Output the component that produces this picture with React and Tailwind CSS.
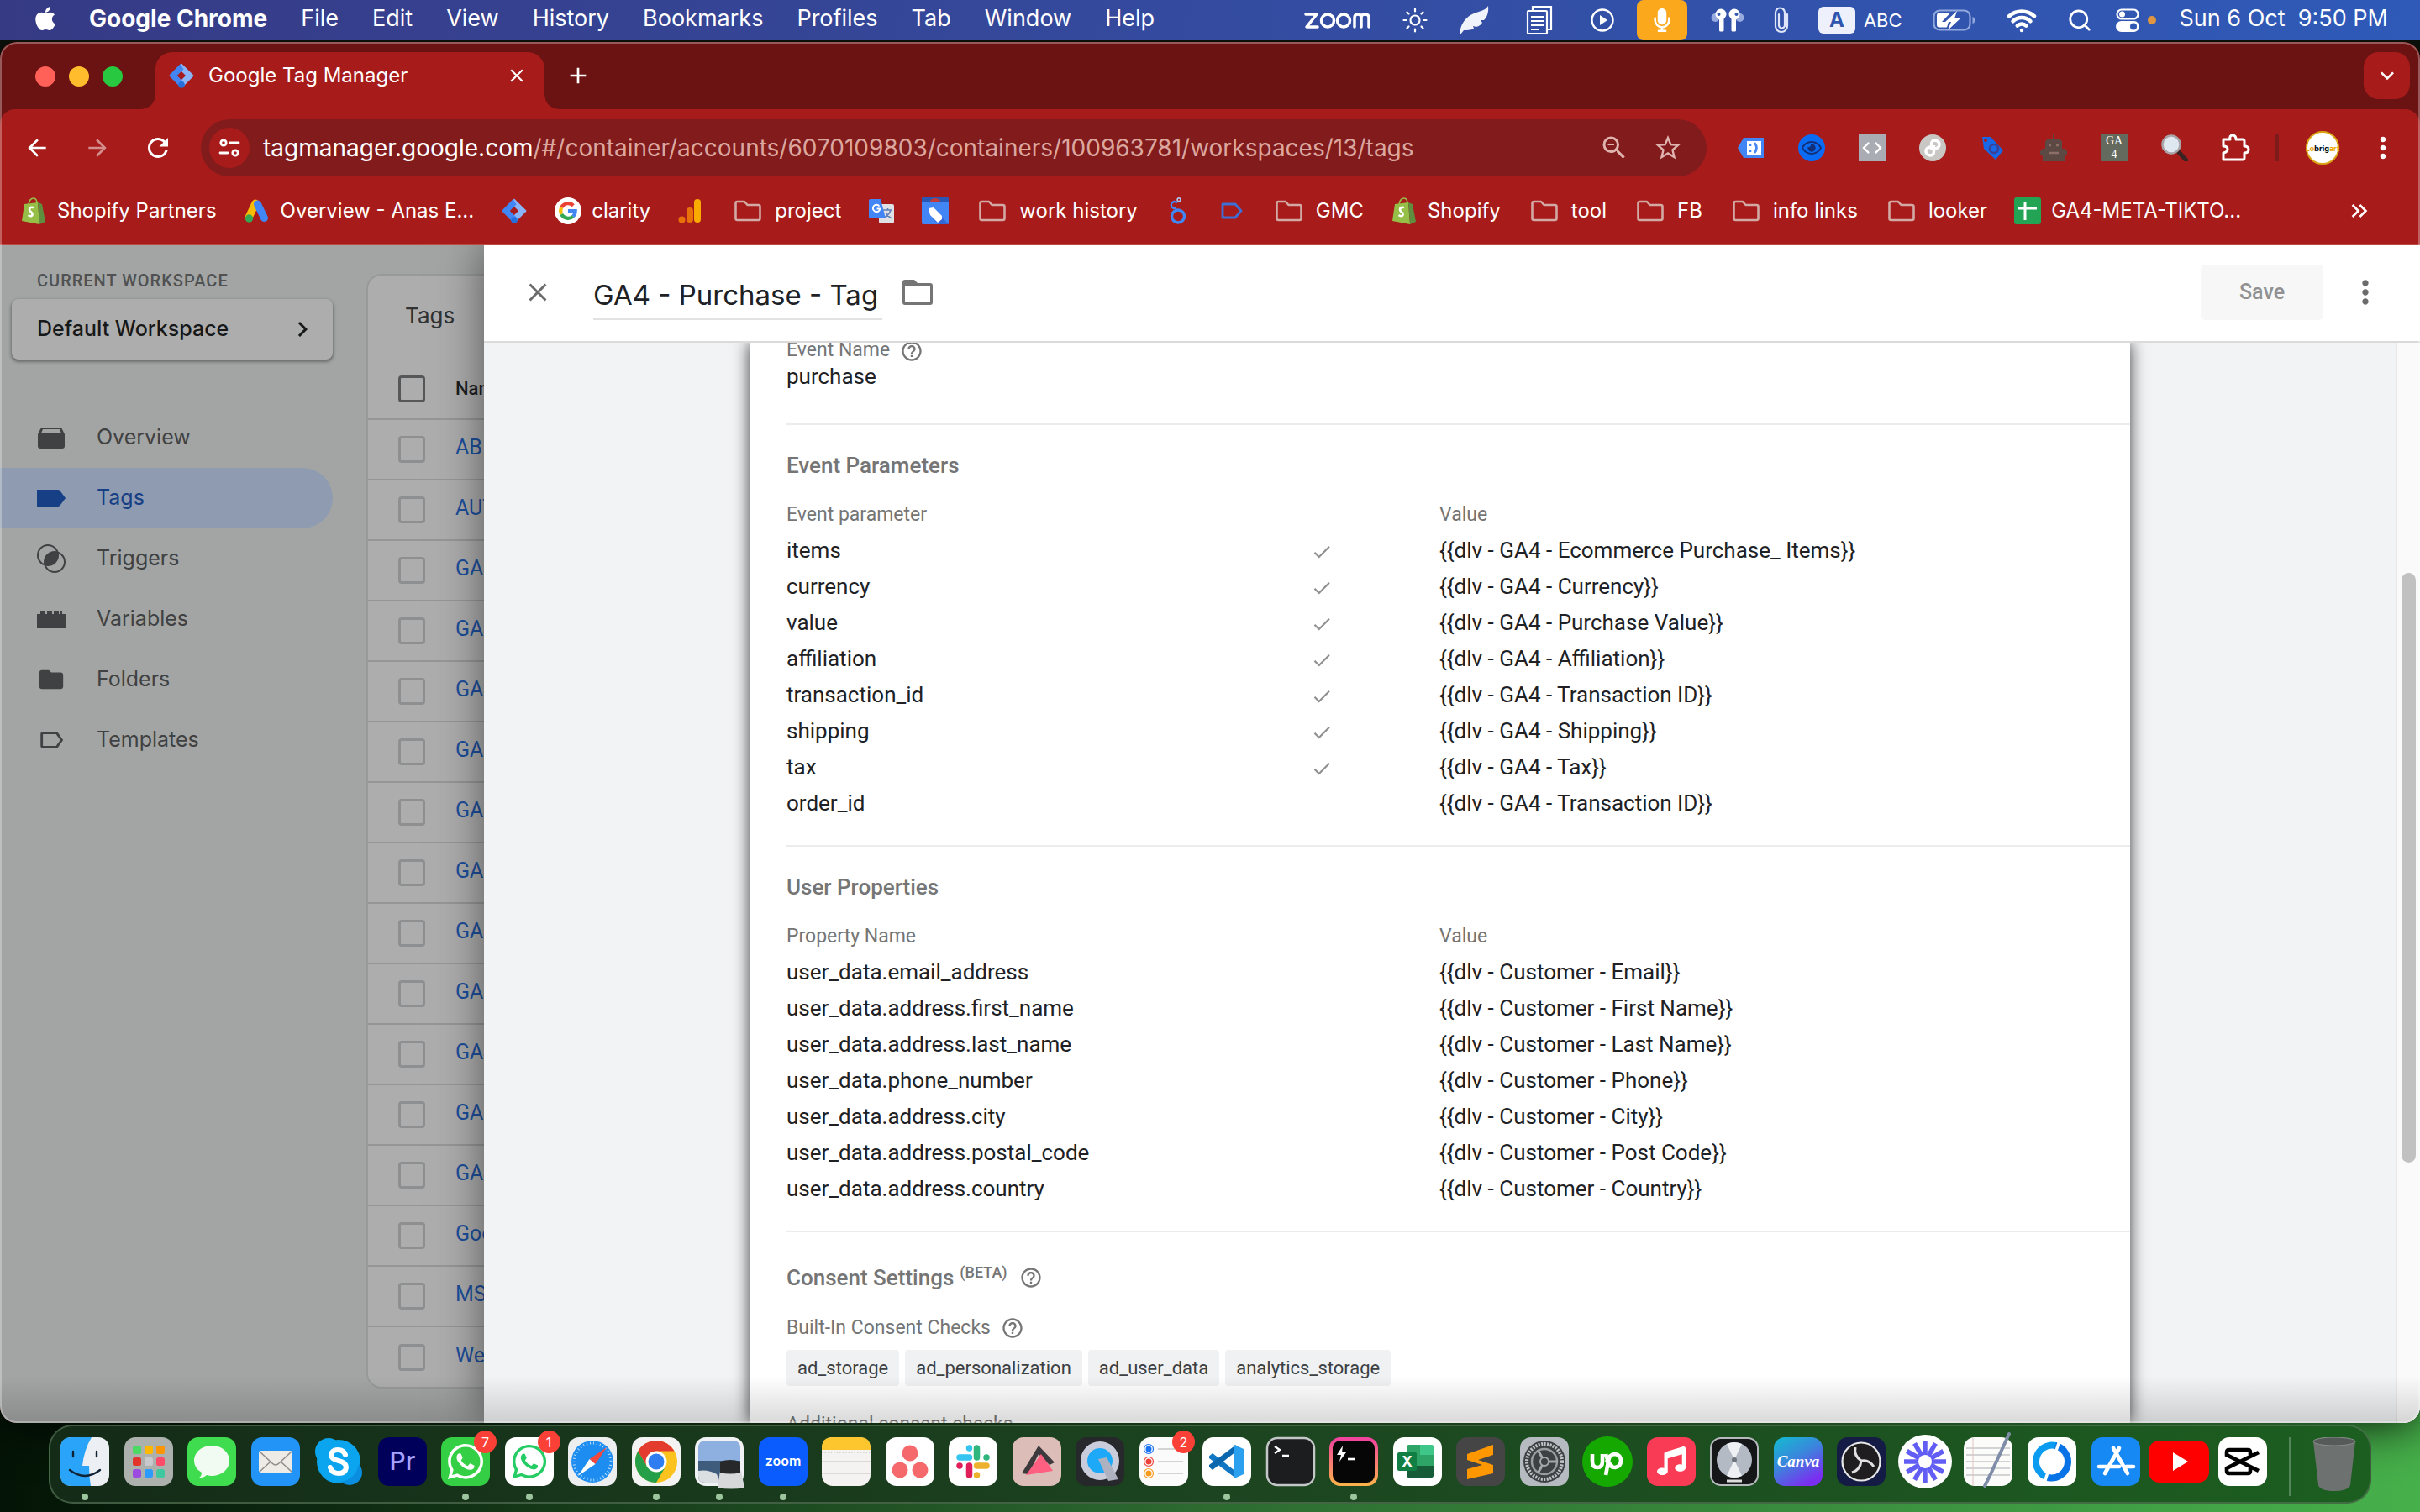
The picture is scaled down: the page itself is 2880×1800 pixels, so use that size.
import React from "react";
import { FaApple, FaMicrophone, FaWhatsapp, FaMusic, FaRegEye } from "react-icons/fa";
import {
  MdArrowBack, MdArrowForward, MdRefresh, MdClose, MdAdd, MdKeyboardArrowDown, MdZoomOut, MdStarBorder,
  MdMoreVert, MdChevronRight, MdLabelOutline, MdFolder,
  MdHelpOutline, MdCheck, MdCode, MdKeyboardDoubleArrowRight,
} from "react-icons/md";
import { Wifi, Search } from "lucide-react";

const menus = ["File", "Edit", "View", "History", "Bookmarks", "Profiles", "Tab", "Window", "Help"];

/* ---------- small logos ---------- */
function TagManagerLogo() {
  return (
    <svg viewBox="0 0 32 32" className="size-8 shrink-0">
      <path d="M16 1.500 30 15.200q.9.8 0 1.700L17.500 29.400 12.300 24 20 16 11 7Z" fill="#8ab4f8" />
      <path d="M14.600 1.900 2 15q-1 1 0 2l12 12.300 5-5L11 16l7.500-7.500Z" fill="#4285f4" />
      <path d="M11 16l5-5 5 5-5 5Z" fill="#a71c1b" />
      <circle cx="16" cy="27" r="3.800" fill="#246fdb" />
    </svg>
  );
}
function ShopifyLogo() {
  return (
    <svg viewBox="0 0 32 32" className="size-8 shrink-0">
      <path d="M10 9c0-5 3-8 6-8s4 3 4 7" fill="none" stroke="#95bf47" strokeWidth="1.600" />
      <path d="M5 8 21 6l2 26L2 28Z" fill="#95bf47" />
      <path d="m21 6 5 2 4 21-7 3Z" fill="#5e8e3e" />
      <path d="M16 12.500c-2-1.400-5-.6-5 1.900 0 2.800 3.600 2.800 3.600 5.600 0 2.600-2.800 2.800-5 1" fill="none" stroke="#fff" strokeWidth="2.600" />
    </svg>
  );
}
function AdsLogo() {
  return (
    <svg viewBox="0 0 32 32" className="size-8 shrink-0">
      <path d="M14 7 6 24" stroke="#fbbc04" strokeWidth="9" strokeLinecap="round" />
      <path d="m16.500 8 8 16.500" stroke="#4285f4" strokeWidth="9" strokeLinecap="round" />
      <circle cx="6.500" cy="25" r="4.700" fill="#34a853" />
    </svg>
  );
}
function GoogleLogo() {
  return (
    <svg viewBox="0 0 32 32" className="size-8 shrink-0">
      <circle cx="16" cy="16" r="16" fill="#fff" />
      <g fill="none" strokeWidth="4.200">
        <path d="M22.200 9.800A8.700 8.700 0 0 0 8.200 12" stroke="#ea4335" />
        <path d="M8.200 12a8.700 8.700 0 0 0 0 8" stroke="#fbbc04" />
        <path d="M8.200 20a8.700 8.700 0 0 0 13.800 2.400" stroke="#34a853" />
        <path d="M22 22.400A8.700 8.700 0 0 0 24.700 16H16" stroke="#4285f4" />
      </g>
    </svg>
  );
}
function AnalyticsLogo() {
  return (
    <svg viewBox="0 0 32 32" className="size-8 shrink-0">
      <rect x="20" y="2" width="8" height="28" rx="4" fill="#f9ab00" />
      <rect x="11" y="12" width="8" height="18" rx="4" fill="#e8710a" />
      <circle cx="5.500" cy="26.500" r="4" fill="#e8710a" />
    </svg>
  );
}
function FolderOutline() {
  return (
    <svg viewBox="0 0 32 32" className="mx-1 size-8 shrink-0" fill="none" stroke="#d3a9a4" strokeWidth="2.600" strokeLinejoin="round">
      <path d="M1.500 7q0-2 2-2H12l3.500 4h13q2 0 2 2v14q0 2-2 2h-25q-2 0-2-2Z" />
    </svg>
  );
}
function TranslateLogo() {
  return (
    <svg viewBox="0 0 32 32" className="size-8 shrink-0">
      <rect x="13" y="8" width="18" height="23" rx="2" fill="#dfe1e5" />
      <path d="M18 15h11m-5.500-2v2m3.500 0c-1 4-4 7-7.500 9m2-6c1 2.500 3 5 6 6.500" stroke="#5f7fb5" strokeWidth="1.600" fill="none" />
      <path d="M3 2h12l6 23H3q-2 0-2-2V4q0-2 2-2Z" fill="#4285f4" />
      <path d="M13.500 10.500a4.200 4.200 0 1 0 .8 3H10.500" stroke="#fff" strokeWidth="2" fill="none" />
    </svg>
  );
}
function TagAssistantLogo() {
  return (
    <svg viewBox="0 0 32 32" className="size-8 shrink-0">
      <rect width="32" height="32" rx="2" fill="#4285f4" />
      <path d="M0 2q0-2 2-2h28q2 0 2 2v4H0Z" fill="#2a56b4" />
      <path d="M10 5a6 4 0 0 1 12 0Z" fill="#c23a3a" />
      <path d="m15 27 9-3 8 8H20Z" fill="#3367d6" />
      <path d="m8 13 6-1 10 10v4l-5 4-9-9Z" fill="#fff" />
    </svg>
  );
}
function LookerLogo() {
  return (
    <svg viewBox="0 0 32 32" className="size-8 shrink-0" fill="none" stroke="#4285f4">
      <circle cx="16" cy="22.500" r="7.500" strokeWidth="3.400" />
      <path d="M14 12.500a4 4 0 1 1 1-6" strokeWidth="2.400" />
      <circle cx="17" cy="2.800" r="1.900" strokeWidth="1.600" stroke="#a9c2ee" />
    </svg>
  );
}
function LabelLogo() {
  return (
    <svg viewBox="0 0 32 32" className="size-8 shrink-0" fill="none" stroke="#3d6fd6" strokeWidth="2.800" strokeLinejoin="round">
      <path d="M5 8h15l7 8-7 8H5Z" />
    </svg>
  );
}
function SheetsLogo() {
  return (
    <svg viewBox="0 0 32 32" className="size-8 shrink-0">
      <rect width="32" height="32" rx="3" fill="#23a455" />
      <path d="M13 5v22M4 13h23" stroke="#fff" strokeWidth="3" />
    </svg>
  );
}

const bookmarks = [
  [ShopifyLogo, "Shopify Partners"], [AdsLogo, "Overview - Anas E..."], [TagManagerLogo, ""], [GoogleLogo, "clarity"],
  [AnalyticsLogo, ""], [FolderOutline, "project"], [TranslateLogo, ""], [TagAssistantLogo, ""], [FolderOutline, "work history"],
  [LookerLogo, ""], [LabelLogo, ""], [FolderOutline, "GMC"], [ShopifyLogo, "Shopify"], [FolderOutline, "tool"],
  [FolderOutline, "FB"], [FolderOutline, "info links"], [FolderOutline, "looker"], [SheetsLogo, "GA4-META-TIKTO..."],
];

/* ---------- menu bar ---------- */
function MenuBar() {
  return (
    <header className="relative z-10 flex h-12 shrink-0 items-center bg-linear-to-r from-[#363a85] via-[#344b9f] to-[#2f5ab8] text-[27px] leading-[44px] text-white">
      <div className="flex items-center gap-10 pb-1 pl-[38px]">
        <FaApple className="-mr-1 size-8" />
        <span className="text-[28px] font-bold">Google Chrome</span>
        {menus.map((m) => <span key={m}>{m}</span>)}
      </div>
      <div className="ml-auto flex h-12 items-center pr-[38px]">
        <svg viewBox="0 0 80 24" className="h-6 w-20" fill="none" stroke="#fff" strokeWidth="3.500" strokeLinejoin="round" strokeLinecap="round">
          <path d="M2 5h13L3 20h13" />
          <circle cx="28" cy="12.500" r="7.500" /><circle cx="47" cy="12.500" r="7.500" />
          <path d="M60 20V9q0-4 4-4t4 4v11M68 9q0-4 4.500-4T77 9v11" />
        </svg>
        <span className="flex w-[104px] justify-center">
          <svg viewBox="0 0 32 32" className="size-8" fill="none" stroke="#fff" strokeWidth="2.200" strokeLinecap="round">
            <circle cx="16" cy="16" r="5.500" />
            <path d="M16 2.500v3m0 21v3M2.500 16h3m21 0h3M6.500 6.500l2 2m15 15 2 2m0-19-2 2m-15 15-2 2" />
          </svg>
        </span>
        <svg viewBox="0 0 36 36" className="size-9"><path d="M1 35C2 22 8 16 14 12 22 7 31 8 35 1c1 9-2 14-5 17l-4 0 2 3c-2 3-4 4-7 5l-4-1 1 3c-4 2-8 2-12 2L2 35Z" fill="#f0f3fb" /></svg>
        <span className="flex w-[120px] justify-center">
          <svg viewBox="0 0 32 36" className="h-9 w-8" fill="none" stroke="#fff" strokeWidth="2.200">
            <path d="M8 7V2h22v27h-5" /><rect x="2" y="7" width="23" height="27" rx="1" /><path d="M6 14h15M6 19h15M6 24h15M6 29h9" />
          </svg>
        </span>
        <svg viewBox="0 0 30 30" className="size-[30px]"><circle cx="15" cy="15" r="12.500" fill="none" stroke="#fff" strokeWidth="2.400" /><path d="m12 9 9 6-9 6Z" fill="#fff" /></svg>
        <span className="ml-[26px] mr-7 flex h-12 w-[60px] items-center justify-center rounded-lg bg-[#fba81c]"><FaMicrophone className="size-7" /></span>
        <svg viewBox="0 0 40 32" className="h-8 w-10">
          <g fill="#98abe0"><circle cx="5.500" cy="13" r="5" /><circle cx="34.500" cy="13" r="5" /></g>
          <g fill="#fff"><circle cx="12" cy="9" r="6.500" /><path d="M10 14h5.500v14q0 1.500-1.500 1.500h-2.500q-1.500 0-1.500-1.500Z" /><circle cx="28" cy="9" r="6.500" /><path d="M24.500 14H30v14q0 1.500-1.500 1.500H26q-1.500 0-1.500-1.500Z" /></g>
          <g fill="#3457b0"><circle cx="9.500" cy="9" r="2" /><circle cx="30.500" cy="9" r="2" /></g>
        </svg>
        <span className="flex w-[88px] justify-center">
          <svg viewBox="0 0 18 34" className="h-[34px] w-[18px]" fill="none" stroke="#dfe6fa" strokeWidth="2.200" strokeLinecap="round"><path d="M16 10v14a7 7 0 0 1-14 0V8a5.500 5.500 0 0 1 11 0v15a3.500 3.500 0 0 1-7 0V10" /></svg>
        </span>
        <span className="flex h-8 w-11 items-center justify-center rounded-md bg-[#eef1fb] text-2xl font-bold text-[#2f55ae]">A</span>
        <span className="ml-[10px] text-[22px]">ABC</span>
        <svg viewBox="0 0 52 26" className="ml-9 h-[26px] w-[52px]">
          <rect x="1.500" y="1.500" width="43" height="23" rx="7" fill="none" stroke="#92a8dc" strokeWidth="2.200" />
          <path d="M47.500 9v8q3-1 3-4t-3-4" fill="#92a8dc" />
          <path d="M8 4.500h13L11 15h8l-2 6.500H8q-3 0-3-3v-11q0-3 3-3Z" fill="#fff" />
          <path d="M29 2 15 15h7l-4 10 15-14h-7Z" fill="#fff" />
        </svg>
        <Wifi className="ml-9 size-9" strokeWidth={3} />
        <Search className="ml-9 size-[30px]" strokeWidth={2.2} />
        <svg viewBox="0 0 28 28" className="ml-7 size-7">
          <rect x="1.500" y="1.500" width="25" height="11" rx="5.500" fill="none" stroke="#fff" strokeWidth="2.200" /><circle cx="7.500" cy="7" r="3.500" fill="#fff" />
          <rect x="0" y="15" width="28" height="13" rx="6.500" fill="#fff" /><circle cx="21" cy="21.500" r="4" fill="#2f57b4" />
        </svg>
        <span className="ml-[10px] size-[10px] rounded-full bg-[#e0953f]" />
        <span className="ml-7 pb-1">Sun 6 Oct&nbsp; 9:50 PM</span>
      </div>
    </header>
  );
}

/* ---------- browser chrome ---------- */
function TabStrip() {
  return (
    <div className="flex h-[80px] shrink-0 items-end bg-[#6b1212] pr-3">
      <div className="flex h-[68px] items-center gap-4 self-end pb-[10px] pl-[42px]">
        <span className="size-6 rounded-full bg-[#ff6159]" />
        <span className="size-6 rounded-full bg-[#ffbd2e]" />
        <span className="size-6 rounded-full bg-[#28c941]" />
      </div>
      <svg viewBox="0 0 20 20" className="ml-[19px] size-5"><path d="M20 0v20H0Q20 20 20 0Z" fill="#a71c1b" /></svg>
      <div className="flex h-[68px] w-[463px] items-center rounded-t-[20px] bg-[#a71c1b] pb-3 pl-[15px] pr-5 text-[24px] text-white">
        <TagManagerLogo />
        <span className="ml-4">Google Tag Manager</span>
        <button aria-label="Close tab" className="ml-auto"><MdClose className="size-[26px]" /></button>
      </div>
      <svg viewBox="0 0 20 20" className="size-5"><path d="M0 0v20h20Q0 20 0 0Z" fill="#a71c1b" /></svg>
      <button aria-label="New tab" className="mb-6 ml-1 text-white"><MdAdd className="size-8" /></button>
      <button aria-label="Search tabs" className="mb-3 ml-auto flex h-14 w-[55px] items-center justify-center rounded-[18px] bg-[#a71c1b] text-white">
        <MdKeyboardArrowDown className="size-8" />
      </button>
    </div>
  );
}

function Extensions() {
  return (
    <div className="flex items-center gap-10 pl-[37px] pr-6">
      <svg viewBox="0 0 32 32" className="size-8"><path d="M0 16 7 4h24v24H7Z" fill="#4285f4" /><rect x="11" y="8" width="17" height="17" fill="#fff" /><path d="M15 12v2m0 5v2m5-11q5 6 0 12" stroke="#4285f4" strokeWidth="2.600" fill="none" /></svg>
      <span className="flex size-8 items-center justify-center rounded-full bg-[#0a6cf5] text-[#122f78]"><FaRegEye className="size-6" /></span>
      <span className="flex size-8 items-center justify-center bg-[#a9acb3] text-white"><MdCode className="size-7" /></span>
      <svg viewBox="0 0 32 32" className="size-8"><circle cx="16" cy="16" r="16" fill="#c9c7c4" /><g fill="none" stroke="#fff" strokeWidth="3.400"><path d="M14.500 19v-7q0-5 4.500-5 5 1 5 5t-5 5" /><path d="M17.500 13v7q0 5-4.500 5-5-1-5-5t5-5" /></g></svg>
      <svg viewBox="0 0 32 32" className="size-8"><path d="M3 3h10l15 16-9 11L5 17Z" fill="#1668e8" /><circle cx="17" cy="17" r="5" fill="none" stroke="#3a3f94" strokeWidth="2.600" /><circle cx="7" cy="7" r="2" fill="#a71c1b" /></svg>
      <svg viewBox="0 0 32 32" className="size-8" fill="#5d4944">
        <path d="M15 0h2v6h-2zM10 6h12q4 0 4 4v8H6v-8q0-4 4-4ZM3 17h26l3 3v4l-3 2v6H3v-6l-3-2v-4Z" />
        <path d="M10 13h3m6 0h3M10 22h12" stroke="#8d6f68" strokeWidth="2.400" />
      </svg>
      <span className="flex size-8 flex-col items-center bg-[#656a5e] font-['Liberation_Serif'] text-[14px] leading-4 text-white"><span>GA</span><span>4</span></span>
      <svg viewBox="0 0 32 32" className="size-8"><path d="m19 19 11 12" stroke="#3a2323" strokeWidth="5" strokeLinecap="round" /><circle cx="12" cy="12" r="10.500" fill="#dfe8f1" stroke="#a9a4a8" strokeWidth="2.500" /></svg>
      <svg viewBox="0 0 36 36" className="-mx-[2px] size-9" fill="none" stroke="#fff" strokeWidth="3" strokeLinejoin="round"><path d="M4 8h8q-1-5 3-5t4 5h8q2 0 2 2v6q5 0 5 4t-5 4v6q0 2-2 2H4v-8q5-1 5-4.500T4 16Z" /></svg>
      <span className="-mx-2 h-8 w-1 bg-[#7d1a1a]" />
      <span className="flex size-10 items-center justify-center rounded-full border-2 border-[#d9a514] bg-white text-[9px] font-bold leading-none text-[#e9a70c]">Lo<span className="text-black">brig</span>art</span>
      <button aria-label="Menu" className="-ml-2 text-white"><MdMoreVert className="size-10" /></button>
    </div>
  );
}

function Toolbar() {
  return (
    <div className="flex h-[92px] shrink-0 items-center rounded-t-[18px] bg-[#a71c1b] text-white">
      <div className="flex items-center gap-10 pl-7 pr-[33px]">
        <MdArrowBack className="size-8" />
        <MdArrowForward className="size-8 opacity-50" />
        <MdRefresh className="-ml-[2px] size-9" />
      </div>
      <div className="flex h-[68px] min-w-0 flex-1 items-center rounded-full bg-[#821b1c] pl-[10px] pr-7 text-[28px]">
        <span className="flex size-12 items-center justify-center rounded-full bg-[#a71c1b]">
          <svg viewBox="0 0 28 28" className="size-7" fill="none" stroke="#fff" strokeWidth="2.800" strokeLinecap="round"><circle cx="7" cy="8" r="3.200" /><path d="M15 8h10M3 20h9" /><circle cx="21" cy="20" r="3.200" /></svg>
        </span>
        <span className="ml-4 whitespace-nowrap">tagmanager.google.com<span className="text-[#dba79f]">/#/container/accounts/6070109803/containers/100963781/workspaces/13/tags</span></span>
        <MdZoomOut className="ml-auto size-9 shrink-0 text-[#dfb4ae]" />
        <MdStarBorder className="ml-7 size-9 shrink-0 text-[#dfb4ae]" />
      </div>
      <Extensions />
    </div>
  );
}

function BookmarkBar() {
  return (
    <nav className="flex h-[70px] shrink-0 items-center gap-8 border-b-2 border-[#b94a44] bg-[#a71c1b] px-6 pb-[11px] text-[24px] text-white">
      {bookmarks.map(([Icon, label], i) => (
        <a key={i} href="#bookmark" aria-label={label || "Bookmark"} className="flex shrink-0 items-center gap-3 whitespace-nowrap">
          <Icon />
          {label}
        </a>
      ))}
      <button aria-label="More bookmarks" className="ml-auto mr-8"><MdKeyboardDoubleArrowRight className="size-8" /></button>
    </nav>
  );
}

/* ---------- page ---------- */
function OverviewIcon() {
  return <svg viewBox="0 0 34 34" className="size-[34px]"><path d="M5 5h24l4 8v14q0 3-3 3H4q-3 0-3-3V13Z" fill="currentColor" /><path d="M7 7h20l2 5H5Z" fill="#a3a5a4" /></svg>;
}
function TriggersIcon() {
  return <svg viewBox="0 0 34 34" className="size-[34px]"><g fill="none" stroke="currentColor" strokeWidth="2"><circle cx="13" cy="13" r="12" /><circle cx="21" cy="21" r="12" /></g><path d="M9.500 24.500A12 12 0 0 1 24.500 9.500 12 12 0 0 1 9.500 24.500Z" fill="currentColor" /></svg>;
}
function VariablesIcon() {
  return <svg viewBox="0 0 34 34" className="size-[34px]"><path d="M0 11h4V7h6v4h2V7h6v4h2V7h6v4h1V7h3v4h4v17H0Z" fill="currentColor" /></svg>;
}
function TagIcon() {
  return <svg viewBox="0 0 34 34" className="size-[34px]"><path d="M0 7h25q2 0 3 2l6 8-6 8q-1 2-3 2H0Z" fill="currentColor" /></svg>;
}
const nav = [
  ["Overview", OverviewIcon], ["Tags", TagIcon], ["Triggers", TriggersIcon],
  ["Variables", VariablesIcon], ["Folders", MdFolder], ["Templates", MdLabelOutline],
];
const tagRows = ["AB", "AUT", ...Array(11).fill("GA4"), "Google", "MS", "Web"];

function Sidebar() {
  return (
    <aside className="w-[396px] shrink-0 pt-[26px] text-[#3f4142]">
      <p className="pl-11 font-[Roboto] text-[20px] font-medium leading-8 tracking-wider text-[#4f5152]">CURRENT WORKSPACE</p>
      <button className="ml-[14px] mt-[6px] flex h-[72px] w-[382px] items-center justify-between rounded-lg bg-[#adadad] pl-[30px] pr-[18px] text-[25px] font-medium text-[#171819] shadow-[0_2px_4px_rgba(0,0,0,0.5)]">
        Default Workspace
        <MdChevronRight className="size-9" />
      </button>
      <nav className="mt-[57px] text-[25px]">
        {nav.map(([label, Icon]) => (
          <a key={label} href={"#" + label} className={"flex h-[72px] items-center gap-[37px] rounded-r-full pl-11 " + (label === "Tags" ? "bg-[#8e9bb0] text-[#173f86]" : "")}>
            <Icon className="size-[34px]" />
            {label}
          </a>
        ))}
      </nav>
    </aside>
  );
}

function TagTable() {
  return (
    <section className="ml-10 mt-[34px] h-fit flex-1 rounded-l-[18px] border-2 border-[#97999a] bg-[#adadad]">
      <h2 className="pl-11 pt-7 text-[26px] leading-10 text-[#303233]">Tags</h2>
      <table className="mt-[31px] w-full text-left font-[Roboto]">
        <thead>
          <tr className="h-[72px] border-b-2 border-[#949697]">
            <th className="w-[104px] pl-[36px]"><input type="checkbox" aria-label="Select all tags" className="block size-8 appearance-none rounded-[4px] border-[3px] border-[#555758]" /></th>
            <th className="text-[22px] font-medium text-[#1d1e1f]">Name</th>
          </tr>
        </thead>
        <tbody>
          {tagRows.map((t, i) => (
            <tr key={i} className="h-[72px] border-b-2 border-[#949697] last:border-0">
              <td className="pl-[36px]"><input type="checkbox" aria-label={"Select " + t} className="block size-8 appearance-none rounded-[4px] border-[3px] border-[#8d8f90]" /></td>
              <td className="pb-1 text-[25px] text-[#1d4f9c]"><a href="#tag">{t}</a></td>
            </tr>
          ))}
        </tbody>
      </table>
    </section>
  );
}

const params = [
  ["items", "{{dlv - GA4 - Ecommerce Purchase_ Items}}"], ["currency", "{{dlv - GA4 - Currency}}"],
  ["value", "{{dlv - GA4 - Purchase Value}}"], ["affiliation", "{{dlv - GA4 - Affiliation}}"],
  ["transaction_id", "{{dlv - GA4 - Transaction ID}}"], ["shipping", "{{dlv - GA4 - Shipping}}"],
  ["tax", "{{dlv - GA4 - Tax}}"], ["order_id", "{{dlv - GA4 - Transaction ID}}"],
];
const props = [
  ["user_data.email_address", "{{dlv - Customer - Email}}"], ["user_data.address.first_name", "{{dlv - Customer - First Name}}"],
  ["user_data.address.last_name", "{{dlv - Customer - Last Name}}"], ["user_data.phone_number", "{{dlv - Customer - Phone}}"],
  ["user_data.address.city", "{{dlv - Customer - City}}"], ["user_data.address.postal_code", "{{dlv - Customer - Post Code}}"],
  ["user_data.address.country", "{{dlv - Customer - Country}}"],
];

function ParamTable({ title, head, rows, checks }) {
  return (
    <section className="border-t-2 border-[#ececec] pb-[29px] pt-8">
      <h3 className="font-medium leading-8 text-[#757575]">{title}</h3>
      <table className="mt-6 w-full table-fixed text-left">
        <thead>
          <tr className="h-[39px] text-[23px] text-[#757575]">
            <th className="w-[624px] font-normal">{head}</th>
            <th className="w-[153px]" />
            <th className="font-normal">Value</th>
          </tr>
        </thead>
        <tbody>
          {rows.map(([k, v], i) => (
            <tr key={i} className="h-[43px] leading-8">
              <td>{k}</td>
              <td>{i < checks && <MdCheck className="mt-1 size-[26px] text-[#8f8f8f]" />}</td>
              <td>{v}</td>
            </tr>
          ))}
        </tbody>
      </table>
    </section>
  );
}

function TagDrawer() {
  return (
    <div className="absolute inset-y-0 left-[20%] right-0 flex flex-col bg-white shadow-[0_0_50px_rgba(0,0,0,0.5)]">
      <header className="flex h-[116px] shrink-0 items-center border-b-2 border-[#dadada] pb-[2px] pr-[43px]">
        <button aria-label="Close" className="ml-[46px] text-[#6b6b6b]"><MdClose className="size-9" /></button>
        <input aria-label="Tag name" defaultValue="GA4 - Purchase - Tag" className="ml-12 mt-2 h-[58px] w-[344px] border-b-2 border-[#e2e2e2] text-[33px] text-[#202124]" />
        <svg viewBox="0 0 36 30" className="ml-6 h-[30px] w-9" fill="#757575"><path fillRule="evenodd" d="M3 0h11l4 4h15q3 0 3 3v20q0 3-3 3H3q-3 0-3-3V3q0-3 3-3Zm0 7v20h30V7Z" /></svg>
        <button className="ml-auto h-[66px] w-[146px] rounded-md bg-[#f7f7f7] font-[Roboto] text-[25px] font-medium text-[#919191]">Save</button>
        <button aria-label="More actions" className="ml-7 text-[#6b6b6b]"><MdMoreVert className="size-11" /></button>
      </header>
      <div className="flex min-h-0 flex-1 bg-[#f1f3f4]">
        <div className="min-w-0 flex-1 overflow-hidden px-[316px]">
          <div className="h-full bg-white pl-11 font-[Roboto] text-[26px] text-[#202124] shadow-[0_0_18px_rgba(0,0,0,0.75)]">
            <p className="flex h-[19px] items-center gap-3 text-[23px] text-[#757575]">Event Name <MdHelpOutline className="size-7" /></p>
            <p className="mb-[34px] leading-[43px]">purchase</p>
            <ParamTable title="Event Parameters" head="Event parameter" rows={params} checks={7} />
            <ParamTable title="User Properties" head="Property Name" rows={props} checks={0} />
            <section className="border-t-2 border-[#ececec] pt-[38px]">
              <h3 className="flex h-8 items-center font-medium text-[#757575]">
                Consent Settings <span className="mb-[14px] ml-[7px] text-[18px]">(BETA)</span> <MdHelpOutline className="ml-[14px] size-7" />
              </h3>
              <p className="mt-7 flex h-8 items-center gap-3 text-[23px] text-[#757575]">Built-In Consent Checks <MdHelpOutline className="size-7" /></p>
              <div className="mt-[10px] flex gap-[7px] text-[22px] text-[#3c4043]">
                {["ad_storage", "ad_personalization", "ad_user_data", "analytics_storage"].map((c) => (
                  <span key={c} className="rounded-[4px] bg-[#eff1f2] px-[13px] leading-[43px]">{c}</span>
                ))}
              </div>
              <p className="mt-[30px] text-[23px] leading-8 text-[#757575]">Additional consent checks</p>
            </section>
          </div>
        </div>
        <div className="w-[29px] border-l-2 border-[#e8e8e8] bg-[#fafafa] px-[5px] pt-[274px]">
          <div className="h-[702px] rounded-full bg-[#c1c1c1]" />
        </div>
      </div>
    </div>
  );
}

/* ---------- dock ---------- */
function Tile({ fill, children }) {
  return (
    <>
      <rect width="58" height="58" rx="13" fill={fill} />
      {children}
    </>
  );
}
const colours9 = ["#4cd964", "#ffb800", "#ff9500", "#e0342c", "#c7c9cc", "#ff4a68", "#9b4be0", "#2c9bff", "#3fc8a0"];
const apps = [
  ["Finder", true, <Tile fill="#eceff3"><path d="M13 0h24q-9 15-11 34h8q0 13 2 24H13Q0 58 0 45V13Q0 0 13 0Z" fill="#2aa4f8" /><path d="M15 17v6m28-6v6" stroke="#123" strokeWidth="2.400" strokeLinecap="round" /><path d="M11 39q18 14 36 0" stroke="#123" strokeWidth="2.400" fill="none" strokeLinecap="round" /></Tile>],
  ["Launchpad", false, <Tile fill="#adb1ad">{colours9.map((c, i) => <rect key={i} x={10 + (i % 3) * 14} y={10 + Math.floor(i / 3) * 14} width="10" height="10" rx="2.500" fill={c} />)}</Tile>],
  ["Messages", false, <Tile fill="#3fdc4f"><path d="M29 10c12 0 21 8 21 18s-9 18-21 18q-3 0-6-1-4 4-9 3 3-2 3-6-9-5-9-14C8 18 17 10 29 10Z" fill="#f1fbf1" /></Tile>],
  ["Mail", false, <Tile fill="#2294f7"><rect x="9" y="16" width="40" height="26" rx="3" fill="#eeeae6" /><path d="m10 17 15 14q4 4 8 0l15-14M10 41l13-12m12 0 13 12" stroke="#918e8b" strokeWidth="1.600" fill="none" /></Tile>],
  ["Skype", false, <g><circle cx="29" cy="29" r="26" fill="#0aa5ee" /><circle cx="17" cy="17" r="16" fill="#0aa5ee" /><circle cx="42" cy="42" r="15" fill="#0a8fe0" /><circle cx="29" cy="29" r="24" fill="#0aa5ee" /><path d="M37 21q-2-6-9-6t-8 6q0 5 9 7t9 8q-1 7-9 7t-10-7" stroke="#fff" strokeWidth="6" fill="none" strokeLinecap="round" /></g>],
  ["Premiere", false, <Tile fill="#00005b"><text x="29" y="39" textAnchor="middle" fontSize="30" fontWeight="500" fill="#a3a3ff">Pr</text></Tile>],
  ["WhatsApp", true, <Tile fill="#35cf45"><FaWhatsapp x="5" y="5" size="48" color="#fff" /></Tile>, "7"],
  ["WhatsApp Business", true, <Tile fill="#fff"><FaWhatsapp x="6" y="6" size="46" color="#24cc63" /></Tile>, "1"],
  ["Safari", false, <Tile fill="#eceef0"><circle cx="29" cy="29" r="25" fill="#1d8df2" /><circle cx="29" cy="29" r="22" fill="none" stroke="#bfe0fb" strokeDasharray="1 3" strokeWidth="3" /><path d="m46 12-13.500 20-7-6Z" fill="#f4473d" /><path d="m12 46 20.500-14-7-6Z" fill="#fff" /></Tile>],
  ["Chrome", true, <Tile fill="#f3f3f3"><circle cx="29" cy="29" r="25" fill="#fcc31e" /><path d="M7.300 16.500A25 25 0 0 1 50.700 16.500H29L18 35Z" fill="#e33b2e" /><path d="M7.300 16.500A25 25 0 0 0 29 54L40 35H18Z" fill="#25a048" /><circle cx="29" cy="29" r="12.500" fill="#fff" /><circle cx="29" cy="29" r="9.500" fill="#2f7df0" /></Tile>],
  ["Preview", true, <Tile fill="#f0f2f4"><rect x="4" y="4" width="50" height="50" rx="8" fill="#8db0e0" /><path d="M4 28h50v18q0 8-8 8H12q-8 0-8-8Z" fill="#3f5c7c" /><path d="M4 40q12-2 22 4l4 10H12q-8 0-8-8Z" fill="#dcdfe2" /><path d="M30 40h25l4 20q-16 3-32 0Z" fill="#d6d8da" /><path d="M30 29q12-4 24 0v13q-12 3-24 0Z" fill="#26282a" /></Tile>],
  ["Zoom", true, <Tile fill="#0b5cff"><text x="29" y="34" textAnchor="middle" fontSize="16" fontWeight="600" fill="#fff">zoom</text></Tile>],
  ["Notes", false, <Tile fill="#f4f3f1"><path d="M13 0h32q13 0 13 13v2H0v-2Q0 0 13 0Z" fill="#fdc62f" /><path d="M0 18h58" stroke="#b5b2aa" strokeDasharray="1.500 2" /><path d="M0 29h58M0 43h58" stroke="#d3d1cd" strokeWidth="1.500" /></Tile>],
  ["Asana", false, <Tile fill="#fff"><g fill="#f5696d"><circle cx="29" cy="19" r="9.500" /><circle cx="17" cy="39" r="9.500" /><circle cx="41" cy="39" r="9.500" /></g></Tile>],
  ["Slack", false, <Tile fill="#fff"><g strokeWidth="7.500" strokeLinecap="round"><path d="M24.500 13v.1M24.500 24H13" stroke="#36c5f0" /><path d="M45 24v.1M33.500 13v11" stroke="#2eb67d" /><path d="M33.500 45v.1M33.500 34H45" stroke="#ecb22e" /><path d="M13 34v.1M24.500 34v11" stroke="#e01e5a" /></g></Tile>],
  ["Arrow", false, <Tile fill="#ddbdb8"><path d="M31 10 50 30l-6 3-13-13-12 24-8-1Z" fill="#3c3a3c" /><path d="m34 20 14 20-32 5Z" fill="#ff5f80" /></Tile>],
  ["QuickTime", false, <Tile fill="#26282c"><circle cx="29" cy="28" r="19" fill="#1ea9f8" stroke="#c9ccda" strokeWidth="8" /><path d="m27 26 10-2 14 26-12 2Z" fill="#aeb2c0" /></Tile>],
  ["Reminders", false, <Tile fill="#fbfbfb"><path d="M22 14h30M22 29h30M22 43h30" stroke="#c8c8c8" strokeWidth="1.600" />{[["#1a72f5", 14], ["#ee4238", 29], ["#f79a1e", 43]].map(([c, y]) => <g key={y}><circle cx="11" cy={y} r="3.500" fill={c} /><circle cx="11" cy={y} r="5.500" fill="none" stroke={c} strokeWidth="1.200" /></g>)}</Tile>, "2"],
  ["VS Code", true, <Tile fill="#fff"><path d="M8 22.500 12 19l28 22v8L8 25Z" fill="#1177c4" /><path d="m8 35.500 4 3.500 28-22V9L8 33Z" fill="#0a67ad" /><path d="m38 9 11 5v30l-11 5-1-1V10Z" fill="#2aa0ef" /></Tile>],
  ["Terminal", false, <g><rect x="1" y="1" width="56" height="56" rx="12" fill="#1c1d1e" stroke="#c4c7c8" strokeWidth="2.500" /><path d="m10 11 6 4-6 4m9 3h8" stroke="#fff" strokeWidth="2.400" fill="none" /></g>],
  ["Warp", true, <g><defs><linearGradient id="w" x2="0" y2="1"><stop stopColor="#f2449e" /><stop offset="1" stopColor="#fbb04c" /></linearGradient></defs><rect x="2" y="2" width="54" height="54" rx="11" fill="#060606" stroke="url(#w)" strokeWidth="4" /><path d="m16 10-7 11h5l-2 8 8-11h-5Z" fill="#fff" /><path d="M22 26h9" stroke="#fff" strokeWidth="2.600" /></g>],
  ["Excel", false, <Tile fill="#fff"><rect x="16" y="9" width="32" height="39" rx="3" fill="#2ea567" /><path d="M32 9h13q3 0 3 3v9H32Z" fill="#3ec789" /><path d="M16 34h32v11q0 3-3 3H19q-3 0-3-3Z" fill="#175c38" /><rect x="5" y="18" width="23" height="22" rx="2" fill="#117e43" /><text x="16.500" y="35" textAnchor="middle" fontSize="17" fontWeight="700" fill="#fff">X</text></Tile>],
  ["Sublime", false, <Tile fill="#454545"><path d="M13 20 44 9v12L26 27l18 6v10L13 50V38l18-5-18-6Z" fill="#ff9800" /></Tile>],
  ["Settings", false, <Tile fill="#b5bbc0"><circle cx="29" cy="29" r="25" fill="#3e4144" /><circle cx="29" cy="29" r="21" fill="none" stroke="#c2c5c8" strokeWidth="4" strokeDasharray="2 1.500" /><circle cx="29" cy="29" r="15" fill="none" stroke="#989c9f" strokeWidth="2.500" /><path d="M29 29h16M29 29l-8-14m8 14-8 14" stroke="#a5a9ac" strokeWidth="3" /><circle cx="29" cy="29" r="5" fill="#3e4144" stroke="#a5a9ac" strokeWidth="2" /></Tile>],
  ["Upwork", false, <g><circle cx="29" cy="29" r="30" fill="#14a800" /><path d="M11 20v9q0 7 6 7t6-7v-9m4 0q3 12 8 15m-8 10 3-16q1-9 8-9 7 1 7 8t-7 8q-7 0-10-9" fill="none" stroke="#fff" strokeWidth="4.600" /></g>],
  ["Music", false, <Tile fill="#fa3b56"><FaMusic x="12" y="11" size="34" color="#fff" /></Tile>],
  ["Logic", false, <g><rect x="1" y="1" width="56" height="56" rx="12" fill="#151617" stroke="#b6babd" strokeWidth="2" /><circle cx="29" cy="27" r="21" fill="#b4bac3" /><path d="M29 27 20 8q9-4 18 0Zm0 0-9 19q9 4 18 0Z" fill="#eef0f4" /><circle cx="29" cy="27" r="3" fill="#6e747c" /><path d="M20 52h18" stroke="#ddd" strokeWidth="3" /></g>],
  ["Canva", false, <g><defs><linearGradient id="c" x2="0.600" y2="1"><stop stopColor="#12bdd0" /><stop offset="0.500" stopColor="#3a86dc" /><stop offset="1" stopColor="#7a2ff0" /></linearGradient></defs><Tile fill="url(#c)"><text x="29" y="35" textAnchor="middle" fontSize="19" fontStyle="italic" fontWeight="700" fill="#fff" fontFamily="Liberation Serif">Canva</text></Tile></g>],
  ["OBS", false, <Tile fill="#141b45"><circle cx="29" cy="29" r="22.500" fill="#1f1d20" stroke="#e8e8e8" strokeWidth="2.200" /><path d="M29 28q-9-6-7-16m7 16q9-2 15 7m-15-7q-1 11-11 14" stroke="#e0e0e0" strokeWidth="3" fill="none" /></Tile>],
  ["Loom", false, <g><circle cx="29" cy="29" r="32" fill="#fff" />{[0, 30, 60, 90, 120, 150].map((a) => <path key={a} d="M29 4v50" stroke="#625df5" strokeWidth="5.500" transform={`rotate(${a} 29 29)`} />)}<circle cx="29" cy="29" r="8" fill="#fff" /></g>],
  ["TextEdit", false, <Tile fill="#fbfbfa"><path d="M3 13h52M3 21h52M3 29h52M3 37h52M3 45h52" stroke="#c5c6c8" strokeWidth="1.300" /><path d="M11 1v56" stroke="#e3c4c0" /><path d="M54-4 32 44l-7 14" stroke="#7f8da8" strokeWidth="4" strokeLinecap="round" /></Tile>],
  ["Sync", false, <Tile fill="#fff"><g fill="none" strokeWidth="8"><path d="M25 48A19.500 19.500 0 0 1 34 10" stroke="#0b9bf0" /><path d="M33 10A19.500 19.500 0 0 1 24 48" stroke="#0873e6" /></g><path d="m38 4-5 15m-8 20-5 15" stroke="#fff" strokeWidth="3.500" /></Tile>],
  ["App Store", false, <Tile fill="#1689f5"><path d="m33 13-17 30m10-30 17 30M9 35h24m8 0h9" stroke="#fff" strokeWidth="4.600" strokeLinecap="round" /></Tile>],
  ["YouTube", false, <g><rect x="-7" y="4" width="72" height="50" rx="13" fill="#f00" /><path d="m22 18 18 11-18 11Z" fill="#fff" /></g>],
  ["CapCut", false, <Tile fill="#fff"><path d="M48 18 10 37v3q0 3 3 3h22q3 0 3-3v-3M48 40 10 21v-3q0-3 3-3h22q3 0 3 3v3" stroke="#000" strokeWidth="4.600" fill="none" /></Tile>],
];

function Dock() {
  return (
    <footer className="relative mx-[58px] mb-[10px] mt-[2px] flex h-[94px] shrink-0 items-start rounded-[28px] border-2 border-[#5b7a5b]/60 bg-linear-to-r from-[#142b17] via-[#1c4420] to-[#1c5e20] px-3 pt-[13px]">
      <div className="flex flex-1 justify-between">
        {apps.map(([name, running, icon, badge]) => (
          <div key={name} className="relative flex w-[58px] flex-col items-center gap-[9px]">
            <svg viewBox="0 0 58 58" className="size-[58px] overflow-visible" fill="none" role="img" aria-label={name}>{icon}</svg>
            {running && <span className="size-2 rounded-full bg-[#9cc49d]" />}
            {badge && <span className="absolute -right-2 -top-2 flex size-[27px] items-center justify-center rounded-full bg-[#fb4137] text-[16px] text-white">{badge}</span>}
          </div>
        ))}
      </div>
      <div className="mx-[26px] h-[70px] w-[2px] bg-[#55845a]" />
      <svg viewBox="0 0 52 64" className="mr-1 h-16 w-[52px]" role="img" aria-label="Trash">
        <path d="M1 5h50l-6 52q-2 7-19 7T7 57Z" fill="#6d716f" /><ellipse cx="26" cy="5" rx="25" ry="5" fill="#565a58" stroke="#8b908d" />
      </svg>
    </footer>
  );
}

export default function App() {
  return (
    <div className="flex h-screen flex-col overflow-hidden bg-linear-to-r from-[#041406] via-[#2d6b31] to-[#46b04a] font-[Inter,sans-serif]">
      <MenuBar />
      <div className="flex min-h-0 flex-1 flex-col rounded-b-[20px] bg-[#0a0f0a] pt-[2px] shadow-[0_0_60px_rgba(0,0,0,0.95)]">
        <div className="relative flex min-h-0 flex-1 flex-col overflow-hidden rounded-[20px] bg-[#6b1212]">
          <TabStrip />
          <Toolbar />
          <BookmarkBar />
          <main className="relative flex min-h-0 flex-1 overflow-hidden bg-[#a3a5a4]">
            <Sidebar />
            <TagTable />
            <TagDrawer />
            <div className="pointer-events-none absolute inset-x-0 bottom-0 h-14 bg-linear-to-b from-transparent to-black/15" />
          </main>
          <div className="pointer-events-none absolute inset-0 rounded-[20px] border-2 border-white/30" />
        </div>
      </div>
      <Dock />
    </div>
  );
}
